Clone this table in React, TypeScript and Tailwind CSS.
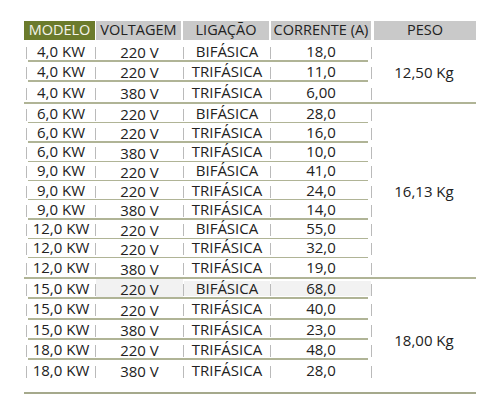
import React from "react";

type Row = { kw: string; v: string; lig: string; a: string; h: string; shade?: boolean };
type Group = { peso: string; rows: Row[]; pesoPad: string };

const groups: Group[] = [
  {
    peso: "12,50 Kg",
    pesoPad: "pt-0",
    rows: [
      { kw: "4,0 KW", v: "220 V", lig: "BIFÁSICA", a: "18,0", h: "h-[20px]" },
      { kw: "4,0 KW", v: "220 V", lig: "TRIFÁSICA", a: "11,0", h: "h-[20px]" },
      { kw: "4,0 KW", v: "380 V", lig: "TRIFÁSICA", a: "6,00", h: "h-[20px]" },
    ],
  },
  {
    peso: "16,13 Kg",
    pesoPad: "pt-[2px]",
    rows: [
      { kw: "6,0 KW", v: "220 V", lig: "BIFÁSICA", a: "28,0", h: "h-[19.25px]" },
      { kw: "6,0 KW", v: "220 V", lig: "TRIFÁSICA", a: "16,0", h: "h-[19.25px]" },
      { kw: "6,0 KW", v: "380 V", lig: "TRIFÁSICA", a: "10,0", h: "h-[19.25px]" },
      { kw: "9,0 KW", v: "220 V", lig: "BIFÁSICA", a: "41,0", h: "h-[19.25px]" },
      { kw: "9,0 KW", v: "220 V", lig: "TRIFÁSICA", a: "24,0", h: "h-[19.25px]" },
      { kw: "9,0 KW", v: "380 V", lig: "TRIFÁSICA", a: "14,0", h: "h-[19.25px]" },
      { kw: "12,0 KW", v: "220 V", lig: "BIFÁSICA", a: "55,0", h: "h-[19.25px]" },
      { kw: "12,0 KW", v: "220 V", lig: "TRIFÁSICA", a: "32,0", h: "h-[19.25px]" },
      { kw: "12,0 KW", v: "380 V", lig: "TRIFÁSICA", a: "19,0", h: "h-[19.25px]" },
    ],
  },
  {
    peso: "18,00 Kg",
    pesoPad: "pt-[22px]",
    rows: [
      { kw: "15,0 KW", v: "220 V", lig: "BIFÁSICA", a: "68,0", h: "h-[20px]", shade: true },
      { kw: "15,0 KW", v: "220 V", lig: "TRIFÁSICA", a: "40,0", h: "h-[21px]" },
      { kw: "15,0 KW", v: "380 V", lig: "TRIFÁSICA", a: "23,0", h: "h-[20px]" },
      { kw: "18,0 KW", v: "220 V", lig: "TRIFÁSICA", a: "48,0", h: "h-[20px]" },
      { kw: "18,0 KW", v: "380 V", lig: "TRIFÁSICA", a: "28,0", h: "h-[20px]" },
    ],
  },
];

const Bar = () => <span className="inline-block w-px h-[12px] bg-[#bababa] shrink-0 mt-[3px]" />;

function TableRow({ r, last }: { r: Row; last: boolean }) {
  return (
    <div className={`${r.h} flex flex-col`}>
      <div className="flex-1 flex items-center">
        <span className="w-[2px]" />
        <Bar />
        <span className="w-[68px] text-center">{r.kw}</span>
        <Bar />
        <span className={`w-[87px] text-center pt-[3px] ${r.shade ? "bg-[#f2f2f2]" : ""}`}>{r.v}</span>
        <Bar />
        <span className={`w-[86px] text-center ${r.shade ? "bg-[#f2f2f2]" : ""}`}>{r.lig}</span>
        <Bar />
        <span className={`w-[100px] text-center ${r.shade ? "bg-[#f2f2f2]" : ""}`}>{r.a}</span>
        <Bar />
      </div>
      {!last && <div className="h-[2px] ml-[4px] mr-[4px] bg-[#b0b496]" />}
    </div>
  );
}

export default function App() {
  return (
    <div
      className="w-[500px] h-[414px] bg-white pt-[21px] pl-[24px] text-[15px] leading-none text-[#222222]"
      style={{ fontFamily: '"Open Sans", "Liberation Sans", sans-serif' }}
    >
      <div className="w-[452px]">
        <div className="flex h-[19px] text-[14.5px]">
          <div className="w-[71px] bg-[#6b7b2c] text-[#f4f4ea] flex items-center justify-center">MODELO</div>
          <div className="w-[85px] ml-[1px] bg-[#c9c9c9] flex items-center justify-center">VOLTAGEM</div>
          <div className="w-[86px] ml-[2px] bg-[#c9c9c9] flex items-center justify-center">LIGAÇÃO</div>
          <div className="w-[100px] ml-[2px] bg-[#c9c9c9] flex items-center justify-center">CORRENTE (A)</div>
          <div className="w-[102px] ml-[3px] bg-[#c9c9c9] flex items-center justify-center">PESO</div>
        </div>
        <div className="mt-[2px]">
          {groups.map((g, gi) => (
            <div key={gi}>
              <div className="flex">
                <div className="w-[348px]">
                  {g.rows.map((r, i) => (
                    <TableRow key={i} r={r} last={i === g.rows.length - 1} />
                  ))}
                </div>
                <div className={`flex-1 flex items-center justify-center ${g.pesoPad}`}>{g.peso}</div>
              </div>
              {gi < groups.length - 1 && <div className="h-[2px] bg-[#b0b496]" />}
            </div>
          ))}
        </div>
        <div className="mt-[12px] h-[2px] bg-[#a5a98c]" />
      </div>
    </div>
  );
}
